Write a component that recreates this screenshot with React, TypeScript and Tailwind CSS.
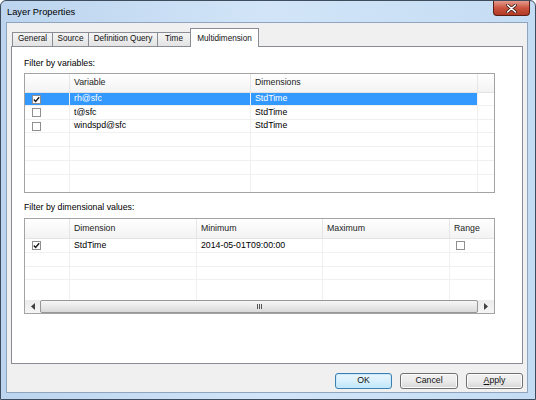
import React from "react"

const font = { fontFamily: '"Liberation Sans", Arial, sans-serif' }

function Check({ on }: { on: boolean }) {
  return (
    <div className="w-[9px] h-[9px] border border-[#8f8f8f] bg-white flex items-center justify-center">
      {on && (
        <svg width="7" height="7" viewBox="0 0 7 7">
          <path d="M0.8 3.6 L2.6 5.4 L6.2 1.2" fill="none" stroke="#1a1a1a" strokeWidth="1.4" />
        </svg>
      )}
    </div>
  )
}

const tabs = [
  { label: "General", w: "w-[41px]" },
  { label: "Source", w: "w-[37px]" },
  { label: "Definition Query", w: "w-[70px]" },
  { label: "Time", w: "w-[34px]" },
]

const topHeights = ["h-[13px]", "h-[14px]", "h-[13px]", "h-[14px]", "h-[14px]", "h-[14px]"]

function TopTable() {
  const vars = ["rh@sfc", "t@sfc", "windspd@sfc"]
  return (
    <div className="w-[471px] h-[120px] border border-[#a3a3a3] bg-white flex flex-col overflow-hidden">
      <div className="h-[19px] flex border-b border-[#e3e3e3] bg-gradient-to-b from-white to-[#f3f3f3] text-[#222]">
        <div className="w-[45px] border-r border-[#e6e6e6]" />
        <div className="w-[181px] border-r border-[#e6e6e6] pl-[4px] flex items-center">Variable</div>
        <div className="w-[227px] border-r border-[#e6e6e6] pl-[4px] flex items-center">Dimensions</div>
        <div className="flex-1" />
      </div>
      {topHeights.map((h, i) => {
        const name = vars[i]
        const sel = i === 0
        return (
          <div key={i} className={`${h} flex border-b border-[#f0f0f0]`}>
            <div className={`w-[45px] border-r border-[#f0f0f0] flex items-center pl-[7px] ${sel ? "bg-[#3399ff]" : ""}`}>
              {name && <Check on={sel} />}
            </div>
            <div className={`w-[181px] border-r border-[#f0f0f0] pl-[4px] flex items-center ${sel ? "bg-[#3399ff] text-white" : ""}`}>
              {name}
            </div>
            <div className={`w-[227px] border-r border-[#f0f0f0] pl-[4px] flex items-center ${sel ? "bg-[#3399ff] text-white" : ""}`}>
              {name ? "StdTime" : ""}
            </div>
            <div className="flex-1" />
          </div>
        )
      })}
      <div className="flex-1 flex">
        <div className="w-[45px] border-r border-[#f0f0f0]" />
        <div className="w-[181px] border-r border-[#f0f0f0]" />
        <div className="w-[227px] border-r border-[#f0f0f0]" />
        <div className="flex-1" />
      </div>
    </div>
  )
}

function ScrollBar() {
  return (
    <div className="h-[13px] flex bg-gradient-to-b from-[#ececec] to-[#f5f5f5]">
      <div className="w-[15px] flex items-center justify-center">
        <svg width="4" height="7" viewBox="0 0 4 7">
          <path d="M4 0 L0 3.5 L4 7 Z" fill="#404040" />
        </svg>
      </div>
      <div className="flex-1 border border-[#979797] rounded-[2px] bg-gradient-to-b from-[#f6f6f6] via-[#e9e9e9] to-[#d9d9d9] flex items-center justify-center">
        <div className="flex gap-[1px]">
          <div className="w-px h-[5px] bg-[#555]" />
          <div className="w-px h-[5px] bg-[#555]" />
          <div className="w-px h-[5px] bg-[#555]" />
        </div>
      </div>
      <div className="w-[16px] flex items-center justify-center">
        <svg width="4" height="7" viewBox="0 0 4 7">
          <path d="M0 0 L4 3.5 L0 7 Z" fill="#404040" />
        </svg>
      </div>
    </div>
  )
}

function BottomTable() {
  const cols = ["w-[45px]", "w-[127px]", "w-[126px]", "w-[127px]"]
  const rowH = ["h-[14px]", "h-[14px]", "h-[13px]"]
  return (
    <div className="w-[471px] h-[96px] border border-[#a3a3a3] bg-white flex flex-col overflow-hidden">
      <div className="h-[20px] flex border-b border-[#e3e3e3] bg-gradient-to-b from-white to-[#f3f3f3] text-[#222]">
        <div className={`${cols[0]} border-r border-[#e6e6e6]`} />
        <div className={`${cols[1]} border-r border-[#e6e6e6] pl-[4px] flex items-center`}>Dimension</div>
        <div className={`${cols[2]} border-r border-[#e6e6e6] pl-[4px] flex items-center`}>Minimum</div>
        <div className={`${cols[3]} border-r border-[#e6e6e6] pl-[4px] flex items-center`}>Maximum</div>
        <div className="flex-1 pl-[4px] flex items-center">Range</div>
      </div>
      {rowH.map((h, i) => (
        <div key={i} className={`${h} flex border-b border-[#f0f0f0]`}>
          <div className={`${cols[0]} border-r border-[#f0f0f0] flex items-center pl-[7px]`}>
            {i === 0 && <Check on />}
          </div>
          <div className={`${cols[1]} border-r border-[#f0f0f0] pl-[4px] flex items-center`}>
            {i === 0 ? "StdTime" : ""}
          </div>
          <div className={`${cols[2]} border-r border-[#f0f0f0] pl-[4px] flex items-center`}>
            {i === 0 ? "2014-05-01T09:00:00" : ""}
          </div>
          <div className={`${cols[3]} border-r border-[#f0f0f0]`} />
          <div className="flex-1 flex items-center pl-[6px]">{i === 0 && <Check on={false} />}</div>
        </div>
      ))}
      <div className="flex-1 flex">
        <div className={`${cols[0]} border-r border-[#f0f0f0]`} />
        <div className={`${cols[1]} border-r border-[#f0f0f0]`} />
        <div className={`${cols[2]} border-r border-[#f0f0f0]`} />
        <div className={`${cols[3]} border-r border-[#f0f0f0]`} />
        <div className="flex-1" />
      </div>
      <ScrollBar />
    </div>
  )
}

function Button({ children, primary, w }: { children: React.ReactNode; primary?: boolean; w: string }) {
  return (
    <div
      className={`${w} h-[16px] rounded-[3px] border flex items-center justify-center text-[#111] ${
        primary
          ? "border-[#3c7fb1] bg-gradient-to-b from-[#eaf6fd] via-[#d9f0fc] to-[#bee6fd] shadow-[inset_0_0_0_1px_#c8e8fb]"
          : "border-[#707070] bg-gradient-to-b from-[#f2f2f2] via-[#ebebeb] to-[#d6d6d6] shadow-[inset_0_0_0_1px_#fcfcfc]"
      }`}
    >
      {children}
    </div>
  )
}

export default function App() {
  return (
    <div
      className="w-[536px] h-[400px] flex flex-col rounded-t-[6px] border border-[#3d4d5e] bg-gradient-to-r from-[#bcd4ee] via-[#d2e5f8] to-[#c4dcf3] text-[8.75px] text-black overflow-hidden"
      style={font}
    >
      {/* title bar */}
      <div className="h-[21px] flex items-start shrink-0">
        <div className="pl-[6px] pt-[6px] text-[9.3px] text-black leading-[11px]">Layer Properties</div>
        <div className="ml-auto mr-[5px] w-[37px] h-[15px] rounded-b-[4px] border border-t-0 border-[#5a1d14] bg-gradient-to-b from-[#e59a8c] via-[#c9543f] to-[#b23a24] flex items-center justify-center">
          <svg width="11" height="9" viewBox="0 0 11 9">
            <path d="M1.5 1 L9.5 8 M9.5 1 L1.5 8" stroke="#3a1a14" strokeWidth="3" strokeLinecap="round" />
            <path d="M1.5 1 L9.5 8 M9.5 1 L1.5 8" stroke="#ffffff" strokeWidth="1.6" strokeLinecap="round" />
          </svg>
        </div>
      </div>

      {/* client area */}
      <div className="ml-[5px] mr-[7px] h-[371px] shrink-0 border border-[#8ea4bf] bg-[#f0f0f0] flex flex-col pl-[4px] pr-[4px] pt-[5px]">
        {/* tabs */}
        <div className="h-[18px] flex items-end pl-[1px] relative z-10">
          {tabs.map((t) => (
            <div
              key={t.label}
              className={`${t.w} h-[14px] -mr-px border border-b-0 border-[#898c95] bg-gradient-to-b from-[#f5f5f5] to-[#e3e3e3] flex items-center justify-center text-[8.2px] text-[#111]`}
            >
              {t.label}
            </div>
          ))}
          <div className="w-[69px] h-[19px] -mb-px border border-b-0 border-[#898c95] bg-white flex items-start pt-[4px] justify-center text-[8.2px] text-[#111]">
            Multidimension
          </div>
        </div>

        {/* panel */}
        <div className="h-[318px] border border-[#898c95] bg-white flex flex-col pl-[12px] pt-[11px]">
          <div className="h-[11px] leading-[11px] mb-[4px]">Filter by variables:</div>
          <TopTable />
          <div className="h-[11px] leading-[11px] mt-[9px] mb-[5px]">Filter by dimensional values:</div>
          <BottomTable />
        </div>

        {/* buttons */}
        <div className="mt-[9px] h-[16px] flex justify-end gap-[8px]">
          <Button primary w="w-[57px]">OK</Button>
          <Button w="w-[58px]">Cancel</Button>
          <Button w="w-[57px]">
            <span>
              <span className="underline">A</span>pply
            </span>
          </Button>
        </div>
      </div>
    </div>
  )
}
